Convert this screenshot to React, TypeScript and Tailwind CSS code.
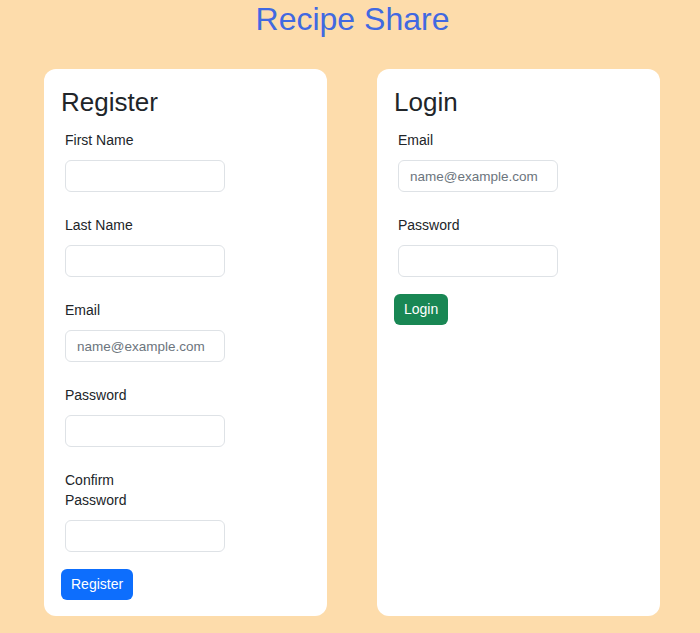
import React from 'react'

const font = { fontFamily: '"Liberation Sans", Arial, sans-serif' }

function Field({ label, placeholder, type = 'text' }: { label: string; placeholder?: string; type?: string }) {
  return (
    <div className="flex flex-col pl-1 mb-[23px]">
      <label className="w-[90px] text-[14px] leading-[20px] text-[#212529]">{label}</label>
      <input
        type={type}
        placeholder={placeholder}
        className="mt-[10px] w-[160px] h-[32px] rounded-[6px] border border-[#dee2e6] bg-white px-[11px] text-[13.5px] text-[#212529] placeholder:text-[#6c757d] outline-none"
      />
    </div>
  )
}

function Card({ title, children }: { title: string; children: React.ReactNode }) {
  return (
    <div className="w-[283px] bg-white rounded-[12px] pt-[18px] pb-4 px-[17px] flex flex-col">
      <h2 className="text-[26px] leading-[31px] text-[#212529] mb-[12px]">{title}</h2>
      {children}
    </div>
  )
}

export default function App() {
  return (
    <div className="min-h-[633px] w-[700px] bg-[#fddcab]" style={font}>
      <h1 className="text-center text-[32px] leading-[1.2] text-[#4169e1] m-0 pl-[5px]">Recipe Share</h1>
      <div className="flex items-stretch gap-[50px] pl-[44px] mt-[31px]">
        <Card title="Register">
          <Field label="First Name" />
          <Field label="Last Name" />
          <Field label="Email" placeholder="name@example.com" />
          <Field label="Password" type="password" />
          <div className="flex flex-col pl-1 mb-[17px]">
            <label className="w-[90px] text-[14px] leading-[20px] text-[#212529]">Confirm Password</label>
            <input
              type="password"
              className="mt-[10px] w-[160px] h-[32px] rounded-[6px] border border-[#dee2e6] bg-white px-[11px] text-[13.5px] outline-none"
            />
          </div>
          <div>
            <button className="h-[31px] px-[10px] rounded-[6px] bg-[#0d6efd] text-white text-[14px]">Register</button>
          </div>
        </Card>
        <Card title="Login">
          <Field label="Email" placeholder="name@example.com" />
          <div className="flex flex-col pl-1 mb-[17px]">
            <label className="w-[90px] text-[14px] leading-[20px] text-[#212529]">Password</label>
            <input
              type="password"
              className="mt-[10px] w-[160px] h-[32px] rounded-[6px] border border-[#dee2e6] bg-white px-[11px] text-[13.5px] outline-none"
            />
          </div>
          <div>
            <button className="h-[31px] px-[10px] rounded-[6px] bg-[#198754] text-white text-[14px]">Login</button>
          </div>
        </Card>
      </div>
    </div>
  )
}
